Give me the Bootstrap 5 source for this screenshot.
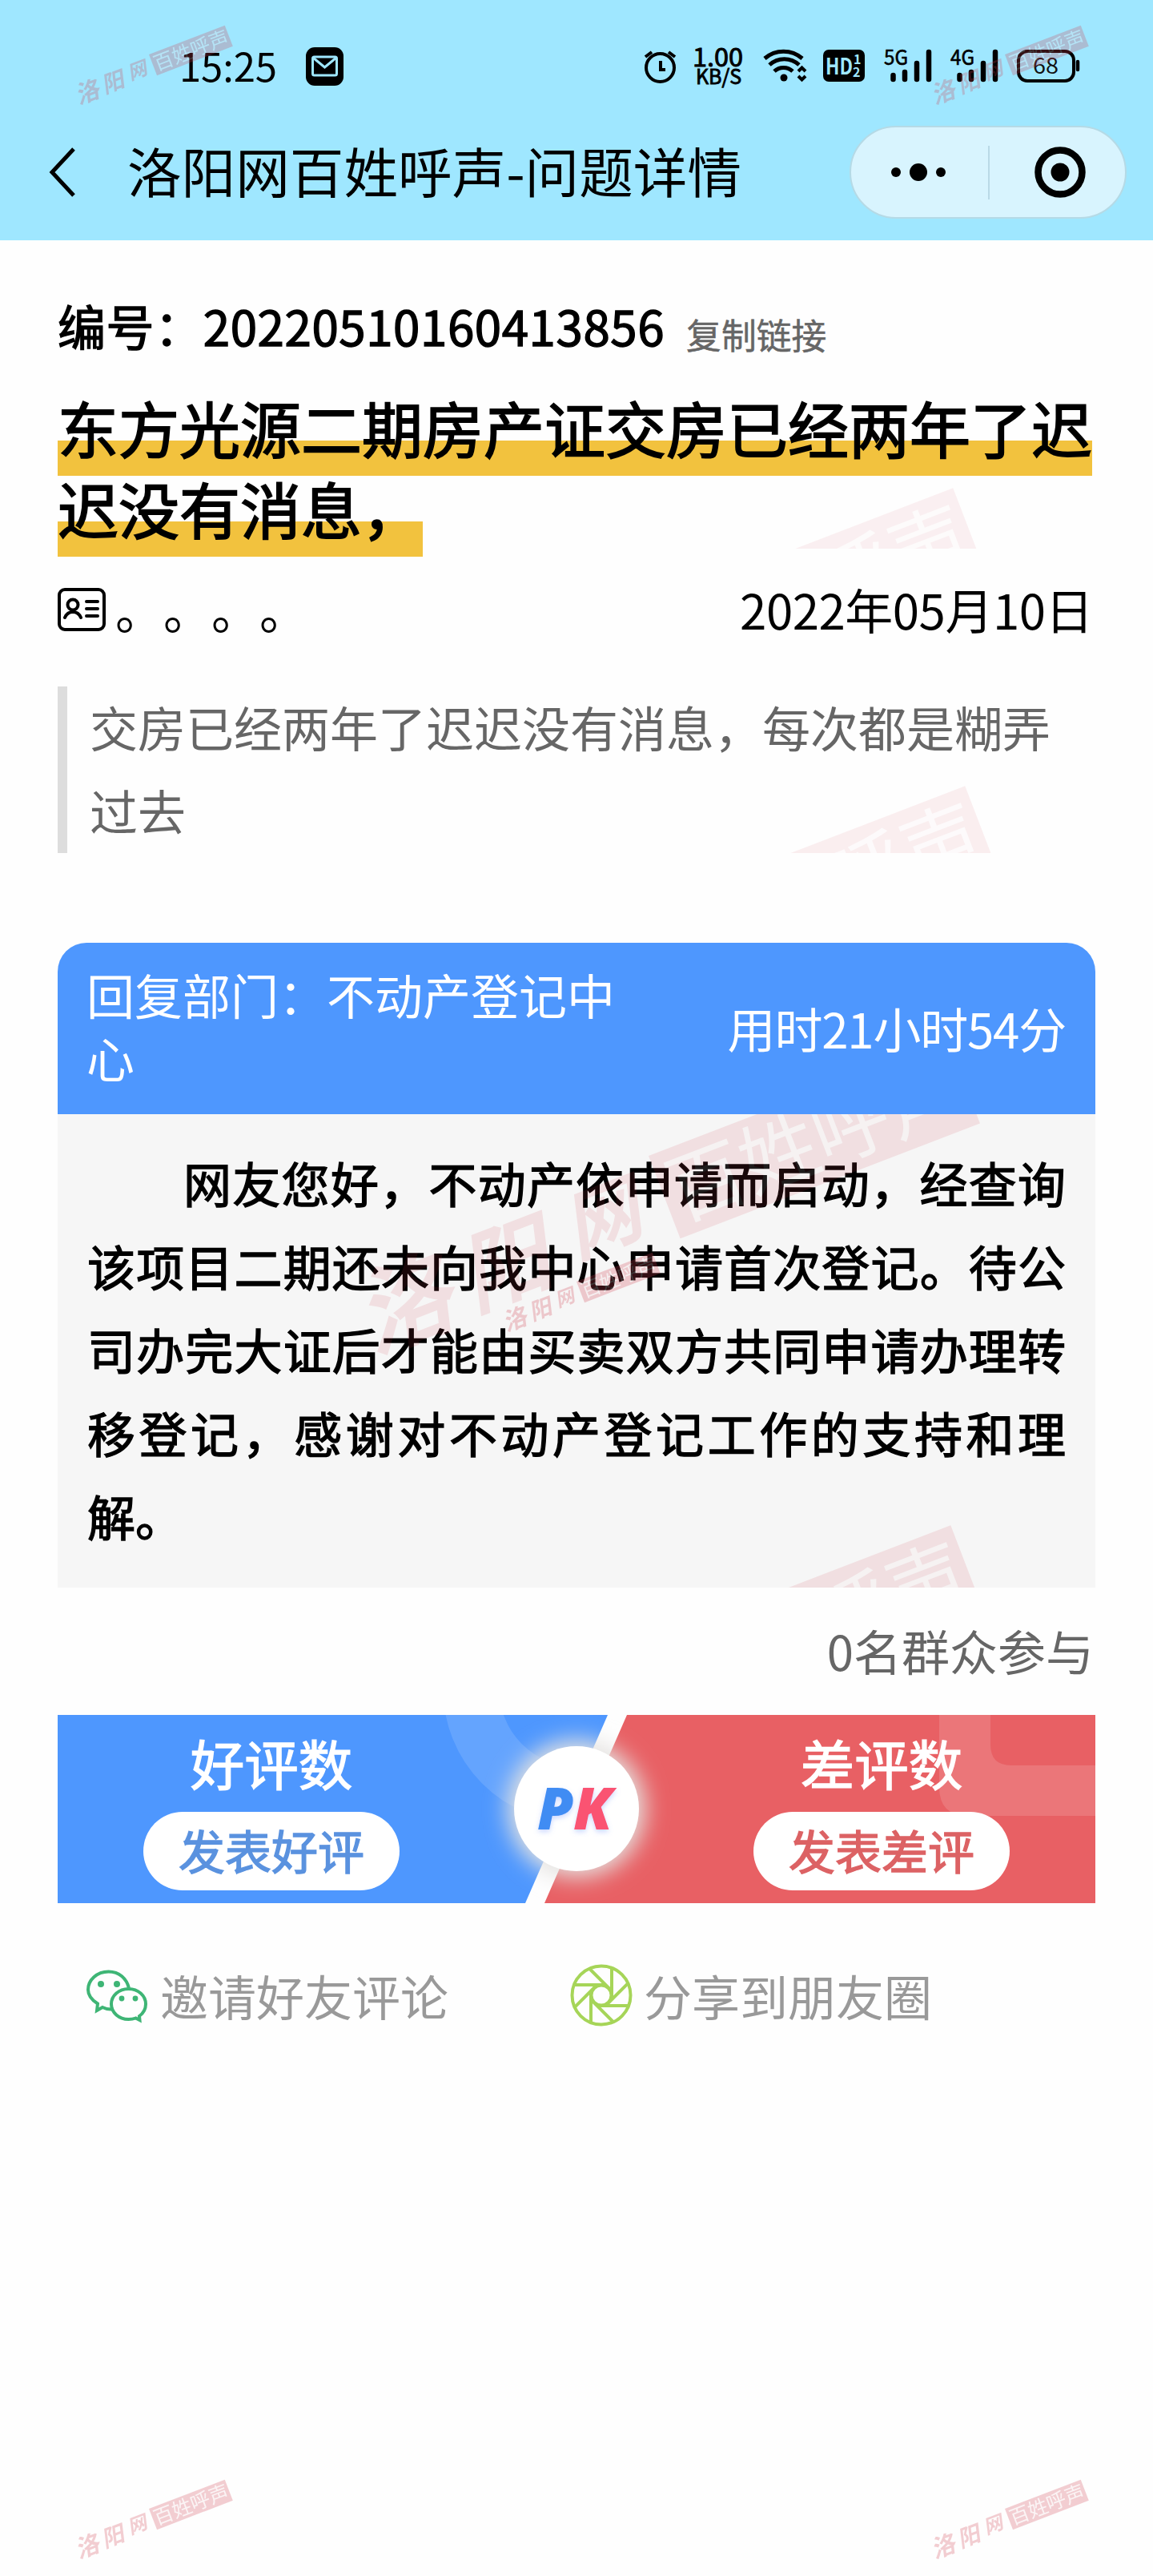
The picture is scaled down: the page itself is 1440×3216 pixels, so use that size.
<!DOCTYPE html>
<html lang="zh-CN">
<head>
<meta charset="utf-8">
<meta name="viewport" content="width=device-width, initial-scale=1">
<title>洛阳网百姓呼声-问题详情</title>
<link href="https://cdn.jsdelivr.net/npm/bootstrap@5.3.0/dist/css/bootstrap.min.css" rel="stylesheet">
<style>
body{font-family:"Noto Sans CJK SC",sans-serif;font-size:60px;line-height:80px;color:#000;background:#fefefe;}
.phone{width:1440px;height:3216px;overflow:hidden;position:relative;}
.topbar{height:300px;background:#9fe7ff;}
.statusbar{height:166px;}
.clock{font-size:49px;padding-left:224px;padding-bottom:5px;letter-spacing:-.1px;}
.mailico{margin-left:36px;}
.staticons{margin-left:auto;margin-right:88px;overflow:visible;}
.titlebar{height:98px;}
.titlebar h1{font-size:67.6px;line-height:92px;padding-bottom:6px;font-weight:400;margin-left:62px;}
.backico{margin-left:59px;}
.capsule{width:346px;height:116px;border:2px solid #b5dae6;border-radius:58px;background:#d8f4fe;margin-right:33px;}
.sheet{padding:66px 72px 0;}
.medium{-webkit-text-stroke:1.4px currentColor;}
.serialrow{height:80px;}
.serial{letter-spacing:.6px;}
.copylink{font-size:43.8px;line-height:56px;color:#666;padding-top:22px;margin-left:27px;-webkit-text-stroke:.5px #666;}
.headline{font-size:76px;line-height:101px;font-weight:400;margin:37px 0 0;-webkit-text-stroke:1.8px #000;position:relative;width:1296px;}
.headline span{background:linear-gradient(transparent 72px,#f2c23e 72px);padding-bottom:6px;-webkit-box-decoration-break:clone;box-decoration-break:clone;}
.idline{margin-top:36px;height:80px;}
.dotname{margin-left:12px;padding-bottom:3px;}
.dotname span{width:60px;}
.dateline{margin-right:3px;padding-bottom:3px;letter-spacing:-.5px;}
.quote{margin-top:56px;height:208px;line-height:104px;border-left:12px solid #ddd;padding-left:28px;color:#666;position:relative;overflow:hidden;}
.quote p{margin:-2px 0 0;}
.reply{margin-top:112px;}
.replyhead{height:214px;background:#4e97fe;color:#fff;border-radius:36px 36px 0 0;padding:0 37px 0 36px;}
.dept{width:700px;line-height:79px;margin-top:-8px;}
.spent{letter-spacing:-1.2px;margin-top:-3px;}
.replybody{height:591px;background:#f6f6f6;padding:33px 37px 0;line-height:104px;text-align:justify;text-indent:120px;position:relative;overflow:hidden;}
.joined{margin-top:38px;color:#666;margin-right:2px;}
.pkbanner{margin-top:41px;height:235px;position:relative;color:#fff;}
.pkbanner>svg{position:absolute;left:0;top:0;}
.side{width:320px;padding-top:19px;position:relative;}
.side.good{margin-left:107px;}
.side.bad{margin-left:442px;}
.sidetitle{font-size:67.5px;}
.ratebtn{margin-top:22px;width:320px;height:98px;border-radius:49px;background:#fff;border:0;font-size:58px;line-height:90px;padding:0 0 4px;}
.good .ratebtn{color:#5a92df;}
.bad .ratebtn{color:#dc6264;}
.share{margin-top:75px;height:80px;color:#999;}
.wechat{margin-left:28px;}
.moments{margin-left:151px;margin-right:13px;}
.stamp{position:absolute;pointer-events:none;overflow:visible;}
.s-tl{left:186px;top:68px;}.s-tr{left:1255px;top:68px;}.s-mid{left:720px;top:1600px;}
.s-bl{left:186px;top:3132px;}.s-br{left:1255px;top:3132px;}
.clipbox{position:absolute;left:0;top:0;width:100%;height:100%;overflow:hidden;pointer-events:none;}
.w-head{left:744px;top:270px;}
.w-quote{left:747px;top:268px;}
.w-reply1{left:738px;top:52px;}
.w-reply2{left:741px;top:657px;}
</style>
<script src="https://cdn.jsdelivr.net/npm/bootstrap@5.3.0/dist/js/bootstrap.bundle.min.js"></script>
</head>
<body>
<svg width="0" height="0" class="position-absolute">
  <defs>
    <g id="stamp" font-family="'Noto Sans CJK SC',sans-serif" font-weight="700" stroke="none">
      <g transform="rotate(-21)">
        <rect width="101.500" height="28" fill="#cf3f4f"/>
        <g fill="#fff" fill-opacity=".8" font-size="24.500" font-weight="400"><text x="2" y="23">百姓呼声</text></g>
        <g fill="#cf3f4f"><text x="-104" y="27" font-size="30" font-style="italic">洛</text><text x="-69" y="26" font-size="28" font-style="italic">阳</text><text x="-33" y="22" font-size="24" font-style="italic">网</text></g>
      </g>
    </g>
  </defs>
</svg>
<div class="phone">
  <header class="topbar">
    <div class="statusbar d-flex align-items-center">
      <span class="clock">15:25</span>
      <svg class="mailico" width="47" height="48" viewBox="0 0 47 48"><rect width="47" height="48" rx="11"/><rect x="8.500" y="12" width="30" height="23" rx="2" fill="none" stroke="#9fe7ff" stroke-width="3"/><path d="M9 13l14.500 12L38 13" fill="none" stroke="#9fe7ff" stroke-width="3"/></svg>
      <svg class="staticons" width="552" height="60" viewBox="800 53 552 60" fill="none" stroke="#000" font-family="'Noto Sans CJK SC',sans-serif">
        <circle cx="824.500" cy="84.500" r="17.500" stroke-width="4"/><path d="M825 76v11h6" stroke-width="4"/><path d="M806 71l8-6M843 71l-8-6" stroke-width="4"/>
        <g fill="#000" stroke="#000" stroke-width=".9"><text x="865" y="82.500" font-size="31" textLength="63" lengthAdjust="spacingAndGlyphs">1.00</text><text x="869" y="105" font-size="25" textLength="57" lengthAdjust="spacingAndGlyphs">KB/S</text></g>
        <g stroke-width="5"><path d="M955 73a36 36 0 0 1 47 0"/><path d="M961 81a27 27 0 0 1 37 0"/><path d="M967 89a17 17 0 0 1 23 0"/></g>
        <circle cx="979" cy="97" r="4.500" fill="#000" stroke="none"/><path d="M997 89l4.500-4.500 4.500 4.500M997 95l4.500 4.500 4.500-4.500" stroke-width="4"/>
        <rect x="1028" y="62" width="52" height="40" rx="7" fill="#000" stroke="none"/>
        <g fill="#9fe7ff" stroke="none" font-weight="700"><text x="1031" y="92.500" font-size="28" textLength="34" lengthAdjust="spacingAndGlyphs">HD</text><text x="1066" y="80" font-size="16">1</text><text x="1065" y="95.500" font-size="16">2</text></g>
        <g fill="#000" stroke="#000" stroke-width=".6" font-size="26"><text x="1104" y="81" textLength="30" lengthAdjust="spacingAndGlyphs">5G</text><text x="1187" y="81" textLength="30" lengthAdjust="spacingAndGlyphs">4G</text></g>
        <g stroke-width="6.500" stroke-linecap="round"><path d="M1115.500 94v5M1130 90v9M1145 79v20M1160 65v34"/><path d="M1198.500 94v5M1213 90v9M1228 79v20M1243 65v34"/></g>
        <rect x="1272" y="64" width="69" height="37" rx="11" stroke-width="4"/><path d="M1346 77v10" stroke-width="4.500" stroke-linecap="round"/>
        <text x="1290" y="92" font-size="27" fill="#111" stroke="none" textLength="32" lengthAdjust="spacingAndGlyphs">68</text>
      </svg>
    </div>
    <nav class="titlebar d-flex align-items-center">
      <svg class="backico" width="38" height="64" viewBox="0 0 38 64" fill="none" stroke="#000" stroke-width="5"><path d="M33 3L6 32l27 29"/></svg>
      <h1 class="mb-0 text-nowrap">洛阳网百姓呼声-问题详情</h1>
      <div class="capsule ms-auto">
        <svg class="d-block" width="342" height="112" viewBox="0 0 342 112"><circle cx="56" cy="56" r="6"/><circle cx="84" cy="56" r="11"/><circle cx="112" cy="56" r="6"/><path d="M172 23v67" stroke="#b9d9e6" stroke-width="2"/><circle cx="261" cy="56" r="27.500" fill="none" stroke="#000" stroke-width="8.500"/><circle cx="261" cy="56" r="11.500"/></svg>
      </div>
    </nav>
  </header>

  <main class="sheet">
    <div class="serialrow d-flex align-items-center">
      <span class="medium serial">编号：20220510160413856</span>
      <span class="copylink">复制链接</span>
    </div>
    <h2 class="headline"><span>东方光源二期房产证交房已经两年了迟迟没有消息，</span>
      <div class="clipbox"><svg class="stamp w-head" width="1" height="1"><use href="#stamp" transform="scale(3.95)" opacity=".07"/></svg></div>
    </h2>
    <div class="idline d-flex align-items-center justify-content-between">
      <div class="d-flex align-items-center">
        <svg width="60" height="54" viewBox="0 0 60 54" fill="none" stroke="#000" stroke-width="4" stroke-linecap="round"><rect x="2" y="2" width="56" height="50" rx="7"/><circle cx="19" cy="21" r="6.500"/><path d="M9 37q3-7 10-7t10 7M36 17h14M36 26h14M36 35h14"/></svg>
        <div class="dotname d-flex"><span>。</span><span>。</span><span>。</span><span>。</span></div>
      </div>
      <span class="dateline">2022年05月10日</span>
    </div>
    <div class="quote"><p>交房已经两年了迟迟没有消息，每次都是糊弄<br>过去</p>
      <svg class="stamp w-quote" width="1" height="1"><use href="#stamp" transform="scale(3.95)" opacity=".08"/></svg>
    </div>

    <section class="reply">
      <div class="replyhead d-flex align-items-center justify-content-between">
        <div class="dept">回复部门：不动产登记中<br>心</div>
        <div class="spent">用时21小时54分</div>
      </div>
      <div class="replybody medium">网友您好，不动产依申请而启动，经查询该项目二期还未向我中心申请首次登记。待公司办完大证后才能由买卖双方共同申请办理转移登记，感谢对不动产登记工作的支持和理解。
        <svg class="stamp w-reply1" width="1" height="1"><use href="#stamp" transform="scale(3.95)" opacity=".12"/></svg>
        <svg class="stamp w-reply2" width="1" height="1"><use href="#stamp" transform="scale(3.95)" opacity=".12"/></svg>
      </div>
    </section>

    <div class="joined text-end">0名群众参与</div>

    <section class="pkbanner d-flex">
      <svg width="1296" height="235" viewBox="0 0 1296 235">
        <defs>
          <clipPath id="leftside"><path d="M0 0H687L584 235H0z"/></clipPath>
          <clipPath id="frame"><path d="M0 0H1296V235H0z"/></clipPath>
          <filter id="glow" x="-60%" y="-60%" width="220%" height="220%"><feGaussianBlur stdDeviation="14"/></filter>
          <filter id="soft" x="-30%" y="-30%" width="160%" height="160%"><feDropShadow dx="0" dy="3" stdDeviation="3" flood-color="#7090ff" flood-opacity=".35"/></filter>
        </defs>
        <path d="M0 0H687L584 235H0z" fill="#4e97fe"/>
        <path d="M711 0H1296V235H608z" fill="#e86064"/>
        <g clip-path="url(#leftside)"><circle cx="648" cy="-32" r="131.500" fill="none" stroke="#fff" stroke-opacity=".13" stroke-width="70"/></g>
        <path d="M1101 0H1165V37q0 26 26 26H1296V126H1137q-36 0-36-36z" fill="#fff" fill-opacity=".14"/>
        <g clip-path="url(#frame)"><circle cx="648" cy="117" r="86" fill="#e4e2e0" filter="url(#glow)"/></g>
        <circle cx="648" cy="117" r="78" fill="#fff"/>
        <g font-family="'Open Sans','Noto Sans',sans-serif" font-weight="800" font-style="italic" font-size="73" filter="url(#soft)"><text x="599" y="143" fill="#3f8cf3">P</text><text x="644" y="143" fill="#fa5272" textLength="49" lengthAdjust="spacingAndGlyphs">K</text></g>
      </svg>
      <div class="side good d-flex flex-column align-items-center">
        <div class="sidetitle medium">好评数</div>
        <button type="button" class="ratebtn medium">发表好评</button>
      </div>
      <div class="side bad d-flex flex-column align-items-center">
        <div class="sidetitle medium">差评数</div>
        <button type="button" class="ratebtn medium">发表差评</button>
      </div>
    </section>

    <div class="share d-flex align-items-center">
      <svg class="wechat" width="100" height="100" viewBox="0 0 100 100" fill="none" stroke="#3eb575" stroke-width="4">
        <path d="M40 67.500q-6 .5-12-2.500l-7 4 1-8.500C13 55 10 49 10 43c0-12 11-22.500 25.500-22.500C49 20.500 58 29 61 41"/>
        <path d="M60.500 42C48.500 42 39 50.500 39 61s9.500 19 21.500 19q5 0 9-1.500l5 2.500-.5-5C79.500 72 82 67 82 61c0-10.500-9.500-19-21.500-19z"/>
        <g fill="#3eb575" stroke="none"><circle cx="26" cy="36" r="4"/><circle cx="46" cy="36" r="4"/><circle cx="52" cy="54" r="3.400"/><circle cx="69" cy="54" r="3.400"/></g>
      </svg>
      <span>邀请好友评论</span>
      <svg class="moments" width="80" height="80" viewBox="-40 -40 80 80" fill="none" stroke="#a6d558" stroke-width="4">
        <defs><path id="blade" d="M13 -34V4"/></defs>
        <circle r="36.500"/><circle r="12.500"/>
        <use href="#blade"/><use href="#blade" transform="rotate(45)"/><use href="#blade" transform="rotate(90)"/><use href="#blade" transform="rotate(135)"/><use href="#blade" transform="rotate(180)"/><use href="#blade" transform="rotate(225)"/><use href="#blade" transform="rotate(270)"/><use href="#blade" transform="rotate(315)"/>
      </svg>
      <span>分享到朋友圈</span>
    </div>
  </main>

  <svg class="stamp s-tl" width="1" height="1"><use href="#stamp" opacity=".25"/></svg>
  <svg class="stamp s-tr" width="1" height="1"><use href="#stamp" opacity=".25"/></svg>
  <svg class="stamp s-mid" width="1" height="1"><use href="#stamp" opacity=".25"/></svg>
  <svg class="stamp s-bl" width="1" height="1"><use href="#stamp" opacity=".25"/></svg>
  <svg class="stamp s-br" width="1" height="1"><use href="#stamp" opacity=".25"/></svg>
</div>
</body>
</html>
